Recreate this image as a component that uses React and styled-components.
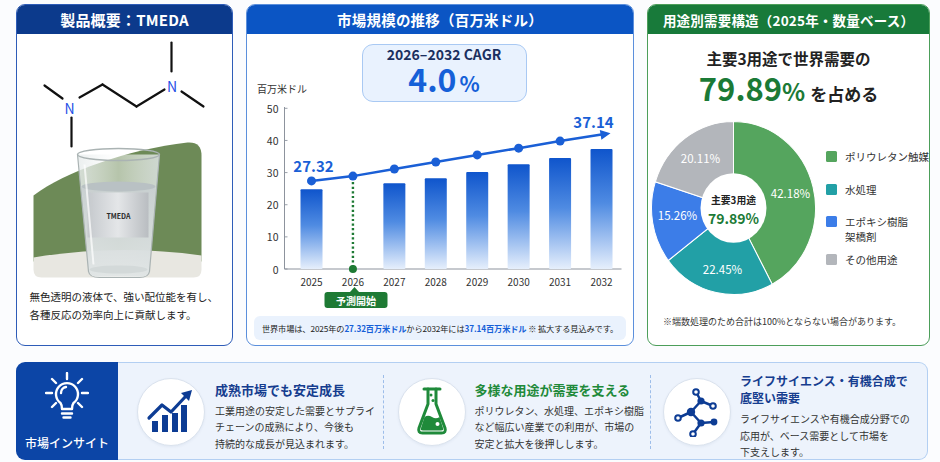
import React from 'react';
import styled, { createGlobalStyle } from 'styled-components';

const GlobalStyle = createGlobalStyle`
  body {
    margin: 0;
    background: #fbfcfe;
    font-family: "Noto Sans CJK JP", "Noto Sans", sans-serif;
    color: #222;
  }
`;

const Page = styled.div`
  width: 940px;
  box-sizing: border-box;
  padding: 4px 0 0 16px;
`;

const TopRow = styled.div`
  display: grid;
  grid-template-columns: 217px 388px 283px;
  column-gap: 13px;
  height: 342px;
`;

const Panel = styled.section`
  display: flex;
  flex-direction: column;
  box-sizing: border-box;
  height: 342px;
  background: #fff;
  border: 1.5px solid ${(p) => p.$border};
  border-radius: 9px;
  overflow: hidden;
`;

const PanelHeader = styled.h2`
  margin: 0;
  flex-shrink: 0;
  height: 29px;
  display: flex;
  align-items: center;
  justify-content: center;
  background: ${(p) => p.$bg};
  color: #fff;
  font-size: ${(p) => p.$size || '15px'};
  font-weight: 700;
  letter-spacing: 0.2px;
`;

/* ---------- left panel ---------- */

const Picture = styled.svg`
  display: block;
  flex-shrink: 0;
`;

const Description = styled.p`
  margin: 4px 0 0;
  padding-left: 12.5px;
  font-size: 10.5px;
  line-height: 18px;
  color: #222;
  white-space: nowrap;
`;

/* ---------- middle panel ---------- */

const CagrRow = styled.div`
  display: grid;
  grid-template-columns: 1fr auto 1fr;
  margin-top: 10px;
`;

const UnitLabel = styled.span`
  justify-self: start;
  align-self: end;
  margin: 0 0 6px 10px;
  font-size: 10px;
  color: #333;
`;

const CagrBox = styled.div`
  box-sizing: border-box;
  width: 165px;
  height: 58px;
  margin-left: 8px;
  display: flex;
  flex-direction: column;
  align-items: center;
  justify-content: center;
  background: #e9f2fe;
  border: 1.5px solid #a9c9f3;
  border-radius: 11px;
`;

const CagrLabel = styled.div`
  font-size: 14px;
  font-weight: 700;
  color: #1b2f5e;
  line-height: 16px;
`;

const CagrValue = styled.div`
  font-size: 32px;
  font-weight: 700;
  color: #1560d8;
  line-height: 33px;

  small {
    font-size: 21px;
    margin-left: 3px;
  }
`;

const ChartSvg = styled.svg`
  display: block;
  flex-shrink: 0;
`;

const ChartNote = styled.div`
  margin: 2px 7px 0;
  height: 24px;
  display: flex;
  align-items: center;
  justify-content: center;
  background: #eaf2fd;
  border-radius: 6px;
  font-size: 8.2px;
  letter-spacing: -0.1px;
  color: #222;
  white-space: nowrap;

  b {
    color: #1560d8;
    font-weight: 700;
  }
`;

/* ---------- right panel ---------- */

const Headline = styled.div`
  padding-top: 13px;
  text-align: center;
`;

const HeadlineTop = styled.div`
  font-size: 15.5px;
  font-weight: 700;
  line-height: 22px;
  color: #222;
`;

const HeadlineBig = styled.div`
  line-height: 38px;
  font-weight: 700;
  color: #222;
  font-size: 17px;
`;

const BigNumber = styled.span`
  font-size: 31px;
  color: #1b7a36;
  margin-right: 5px;

  small {
    font-size: 24px;
  }
`;

const PieRow = styled.div`
  display: flex;
  margin-top: 2px;
`;

const Legend = styled.ul`
  list-style: none;
  margin: 0 0 0 3px;
  padding: 34px 0 0;
  display: flex;
  flex-direction: column;
`;

const LegendItem = styled.li`
  display: flex;
  align-items: flex-start;
  gap: 8px;
  margin-top: ${(p) => p.$gap || '0px'};
  font-size: 10.5px;
  line-height: 15px;
  color: #333;
`;

const Swatch = styled.span`
  flex-shrink: 0;
  width: 11px;
  height: 11px;
  margin-top: 2px;
  border-radius: 1.5px;
  background: ${(p) => p.$color};
`;

const PieNote = styled.div`
  margin-top: auto;
  margin-bottom: 17px;
  padding-left: 15px;
  font-size: 9px;
  color: #333;
  white-space: nowrap;
`;

/* ---------- bottom insight bar ---------- */

const InsightBar = styled.div`
  display: flex;
  width: 912px;
  height: 98px;
  margin-top: 16px;
`;

const InsightBadge = styled.div`
  width: 102px;
  flex-shrink: 0;
  display: flex;
  flex-direction: column;
  align-items: center;
  justify-content: center;
  gap: 6px;
  background: #0c45a6;
  border-radius: 9px 0 0 9px;
  color: #fff;
  font-size: 12px;
  font-weight: 500;
`;

const InsightBody = styled.div`
  flex: 1;
  display: grid;
  grid-template-columns: 265px 1.5px 265px 1.5px 1fr;
  box-sizing: border-box;
  background: #edf3fc;
  border: 1.5px solid #b3cff2;
  border-left: none;
  border-radius: 0 9px 9px 0;
`;

const Divider = styled.div`
  align-self: center;
  height: 74px;
  border-left: 1.5px dashed #9dbde9;
`;

const InsightCard = styled.div`
  display: flex;
  align-items: center;
  gap: ${(p) => p.$gap || '9px'};
  padding-left: ${(p) => p.$pad || '13px'};
`;

const IconCircle = styled.div`
  flex-shrink: 0;
  width: 66px;
  height: 66px;
  display: flex;
  align-items: center;
  justify-content: center;
  background: #fff;
  border: 1px solid #dbe3ee;
  border-radius: 50%;
  box-shadow: 0 1px 3px rgba(20, 50, 110, 0.06);
`;

const CardText = styled.div`
  padding-top: 9px;
  white-space: nowrap;
`;

const CardTitle = styled.h3`
  margin: 0 0 5px;
  font-size: ${(p) => p.$size || '13px'};
  line-height: 17px;
  font-weight: 700;
  color: ${(p) => p.$color};
`;

const CardBody = styled.p`
  margin: 0;
  font-size: 10px;
  line-height: 16.5px;
  color: #333;
`;

/* ---------- drawings ---------- */

const years = [2025, 2026, 2027, 2028, 2029, 2030, 2031, 2032];
const bars = [24.8, null, 26.7, 28.2, 30.2, 32.6, 34.5, 37.3];
const trend = [27.4, 28.9, 31.1, 33.3, 35.5, 37.6, 39.8];
const X = (i) => 312 + i * 41.43;
const Y = (v) => 269 - v * 3.214;

const MarketChart = () => (
  <ChartSvg width="385" height="212" viewBox="247.5 102 385 212">
    <defs>
      <linearGradient id="barFill" x1="0" y1="0" x2="0" y2="1">
        <stop offset="0" stopColor="#0f55cc" />
        <stop offset="0.45" stopColor="#4f8be2" />
        <stop offset="1" stopColor="#e6effc" />
      </linearGradient>
    </defs>
    {[0, 10, 20, 30, 40, 50].map((v) => (
      <g key={v}>
        <text x="279" y={Y(v)} textAnchor="end" dominantBaseline="central" fontSize="10.5" fill="#333">
          {v}
        </text>
        <line x1="285" x2="288" y1={Y(v)} y2={Y(v)} stroke="#9aa0aa" strokeWidth="1" />
      </g>
    ))}
    <line x1="285" x2="285" y1="107" y2="269" stroke="#8d939d" strokeWidth="1" />
    <line x1="285" x2="622" y1="269" y2="269" stroke="#8d939d" strokeWidth="1" />
    {bars.map((v, i) =>
      v ? <rect key={i} x={X(i) - 11} y={Y(v)} width="22" height={269 - Y(v)} fill="url(#barFill)" rx="1" /> : null
    )}
    {years.map((y, i) => (
      <text key={y} x={X(i)} y="281" textAnchor="middle" dominantBaseline="central" fontSize="10" fill="#333">
        {y}
      </text>
    ))}
    <line x1={X(1)} x2={X(1)} y1={Y(28.9) + 6} y2="269" stroke="#1e7a34" strokeWidth="2.4" strokeDasharray="2.2 2.4" />
    <circle cx={X(1)} cy="269" r="4" fill="#1e7a34" />
    <polyline
      points={trend.map((v, i) => `${X(i)},${Y(v)}`).join(' ') + ' 602,134.6'}
      fill="none"
      stroke="#1a5fd6"
      strokeWidth="2.5"
    />
    <polygon points="611,133.2 601.9,139.7 600.3,129.9" fill="#1a5fd6" />
    {trend.map((v, i) => (
      <circle key={i} cx={X(i)} cy={Y(v)} r="4.5" fill="#1a5fd6" />
    ))}
    <text x="314" y="165" textAnchor="middle" dominantBaseline="central" fontSize="15" fontWeight="700" fill="#1a5fd6">
      27.32
    </text>
    <text x="594" y="121" textAnchor="middle" dominantBaseline="central" fontSize="15" fontWeight="700" fill="#1a5fd6">
      37.14
    </text>
    <polygon points="350.5,292 359.5,292 355,287" fill="#1e7a34" />
    <rect x="325" y="292" width="63" height="16" rx="3" fill="#1e7a34" />
    <text x="356.5" y="300.5" textAnchor="middle" dominantBaseline="central" fontSize="10" fontWeight="700" fill="#fff">
      予測開始
    </text>
  </ChartSvg>
);

const slices = [
  { v: 42.18, c: '#55a55e', label: '42.18%', at: [790, 188] },
  { v: 22.45, c: '#22a0a6', label: '22.45%', at: [722, 264] },
  { v: 15.26, c: '#3c7de8', label: '15.26%', at: [677, 210] },
  { v: 20.11, c: '#b3b6bb', label: '20.11%', at: [700, 153] },
];

const slicePath = (r, a0, a1) => {
  const rad = (d) => (d * Math.PI) / 180;
  const x0 = r * Math.sin(rad(a0));
  const y0 = -r * Math.cos(rad(a0));
  const x1 = r * Math.sin(rad(a1));
  const y1 = -r * Math.cos(rad(a1));
  const large = a1 - a0 > 180 ? 1 : 0;
  return `M0 0 L${x0} ${y0} A${r} ${r} 0 ${large} 1 ${x1} ${y1} Z`;
};

const DemandPie = () => {
  let acc = 0;
  return (
    <Picture width="175" height="186" viewBox="647.5 110 175 186">
      <g transform="translate(733 203) scale(1 1.055)">
        {slices.map((s) => {
          const a0 = acc * 3.6;
          acc += s.v;
          return <path key={s.label} d={slicePath(82, a0, acc * 3.6)} fill={s.c} stroke="#fff" strokeWidth="1" />;
        })}
        <circle r="33" fill="#fff" />
      </g>
      {slices.map((s) => (
        <text key={s.label} x={s.at[0]} y={s.at[1]} textAnchor="middle" dominantBaseline="central" fontSize="11.5" fill="#fff">
          {s.label}
        </text>
      ))}
      <text x="733" y="195" textAnchor="middle" dominantBaseline="central" fontSize="9.8" fontWeight="700" fill="#222">
        主要3用途
      </text>
      <text x="733" y="213" textAnchor="middle" dominantBaseline="central" fontSize="14" fontWeight="700" fill="#1b7a36">
        79.89%
      </text>
    </Picture>
  );
};

const ProductPicture = () => (
  <Picture width="214" height="250" viewBox="17.5 34.5 214 250">
    <defs>
      <linearGradient id="labelFill" x1="0" y1="0" x2="1" y2="0">
        <stop offset="0" stopColor="#c5c9cd" />
        <stop offset="0.5" stopColor="#e4e6e8" />
        <stop offset="1" stopColor="#b9bdc1" />
      </linearGradient>
      <linearGradient id="glassFill" x1="0" y1="0" x2="1" y2="0">
        <stop offset="0" stopColor="#e7ecec" stopOpacity="0.85" />
        <stop offset="0.5" stopColor="#ffffff" stopOpacity="0.5" />
        <stop offset="1" stopColor="#dfe5e5" stopOpacity="0.85" />
      </linearGradient>
      <linearGradient id="liquidFill" x1="0" y1="0" x2="0" y2="1">
        <stop offset="0" stopColor="#c8cfd1" />
        <stop offset="1" stopColor="#dfe4e4" />
      </linearGradient>
    </defs>
    <g stroke="#111" strokeWidth="2.2" strokeLinecap="round" fill="none">
      <line x1="45" y1="86" x2="63" y2="99" />
      <line x1="72" y1="118" x2="72" y2="147" />
      <line x1="80" y1="98" x2="103" y2="85" />
      <line x1="103" y1="85" x2="137" y2="107" />
      <line x1="137" y1="107" x2="165" y2="90" />
      <line x1="172" y1="43" x2="172" y2="72" />
      <line x1="182" y1="92" x2="204" y2="107" />
    </g>
    <text x="70" y="108" textAnchor="middle" dominantBaseline="central" fontSize="14" fill="#1f4fe6">N</text>
    <text x="172.5" y="86" textAnchor="middle" dominantBaseline="central" fontSize="14" fill="#1f4fe6">N</text>

    <path d="M34 196 C66 172 128 150 188 143 Q202 142 202 156 L202 262 L34 262 Z" fill="#6d8a57" />
    <path d="M34 258 Q118 244 202 256 L202 270 Q202 278 194 278 L42 278 Q34 278 34 270 Z" fill="#e8e7e1" />

    <path d="M78 155 L89 272 Q90 278 100 278 L140 278 Q149 278 150 272 L160 155 Z" fill="url(#glassFill)" />
    <path d="M82 187 L89 272 Q90 277 100 277 L140 277 Q149 277 150 272 L156 187 Z" fill="url(#liquidFill)" opacity="0.9" />
    <ellipse cx="119" cy="187" rx="37" ry="5" fill="#b9c1c4" />
    <rect x="88" y="193" width="61" height="45" fill="url(#labelFill)" />
    <text x="119" y="216" textAnchor="middle" dominantBaseline="central" fontSize="7" fontWeight="700" fill="#2a2a2a">
      TMEDA
    </text>
    <ellipse cx="119" cy="270" rx="29" ry="4" fill="#cfd6d6" opacity="0.8" />
    <path d="M78 155 L89 272 Q90 278 100 278 L140 278 Q149 278 150 272 L160 155" fill="none" stroke="#aab3b3" strokeWidth="1.2" />
    <ellipse cx="119" cy="155" rx="41" ry="6" fill="none" stroke="#aab3b3" strokeWidth="1.4" />
    <line x1="85" y1="165" x2="94" y2="265" stroke="#fff" strokeWidth="2" opacity="0.7" />
  </Picture>
);

const BulbIcon = () => (
  <svg width="44" height="56" viewBox="0 0 44 56" fill="none" stroke="#fff" strokeWidth="2.4" strokeLinecap="round" strokeLinejoin="round">
    <path d="M22 1v6M7 7l4 4M37 7l-4 4M1 21h6M37 21h6M7 35l4-4M37 35l-4-4" />
    <path d="M15.5 31 A11 11 0 1 1 28.5 31 C27 33 27 35 27 37 L17 37 C17 35 17 33 15.5 31 Z" />
    <path d="M16 21 A6 6 0 0 1 21 15" />
    <path d="M17 41.5h10M18.5 45.5h7" />
  </svg>
);

const GrowthIcon = () => (
  <svg width="50" height="50" viewBox="146 386 50 50">
    <g fill="#0d3c94">
      <rect x="152" y="420" width="6" height="11" />
      <rect x="162" y="414" width="6" height="17" />
      <rect x="172" y="412" width="6" height="19" />
      <rect x="181" y="404" width="6" height="27" />
    </g>
    <polyline points="149,417 162,404 171,411 186,395" fill="none" stroke="#0d3c94" strokeWidth="3.2" strokeLinejoin="round" strokeLinecap="round" />
    <polygon points="192,389 181,392 189,400" fill="#0d3c94" />
  </svg>
);

const FlaskIcon = () => (
  <svg width="40" height="52" viewBox="411 386 40 52">
    <g fill="none" stroke="#1f8a3a" strokeWidth="3" strokeLinecap="round" strokeLinejoin="round">
      <path d="M423 389 H439" />
      <path d="M427 389 V404 L418 428 Q416.5 433 421.5 433 H440.5 Q445.5 433 444 428 L435 404 V389" />
    </g>
    <path d="M423.5 417 Q427 414.5 431 417 T438.5 417 L442 428 Q443 430.5 440 430.5 H422 Q419 430.5 420 428 Z" fill="#1f8a3a" />
    <circle cx="430" cy="395" r="1.5" fill="#1f8a3a" />
    <circle cx="432" cy="400.5" r="1.5" fill="#1f8a3a" />
    <circle cx="436.5" cy="424" r="2" fill="#fff" />
  </svg>
);

const MoleculeIcon = () => (
  <svg width="46" height="50" viewBox="673 386 46 50">
    <g stroke="#0d3c94" strokeWidth="2.5" strokeLinecap="round">
      <line x1="695" y1="391" x2="700" y2="400" />
      <line x1="700" y1="400" x2="712" y2="405" />
      <line x1="700" y1="400" x2="690" y2="411" />
      <line x1="690" y1="411" x2="677" y2="417" />
      <line x1="690" y1="411" x2="700" y2="422" />
      <line x1="700" y1="422" x2="713" y2="421" />
      <line x1="700" y1="422" x2="692" y2="433" />
    </g>
    <g fill="#0d3c94">
      <circle cx="700" cy="400" r="3.6" />
      <circle cx="690" cy="411" r="4.2" />
      <circle cx="700" cy="422" r="3.6" />
      <circle cx="713" cy="421" r="3.4" />
    </g>
    <g fill="#fff" stroke="#0d3c94" strokeWidth="2">
      <circle cx="695" cy="391" r="2.8" />
      <circle cx="712" cy="405" r="2.8" />
      <circle cx="677" cy="417" r="2.8" />
      <circle cx="692" cy="433" r="2.8" />
    </g>
  </svg>
);

const App = () => (
  <>
    <GlobalStyle />
    <Page>
      <TopRow>
        <Panel $border="#2e5cb8">
          <PanelHeader $bg="#0c3a8c">製品概要：TMEDA</PanelHeader>
          <ProductPicture />
          <Description>
            無色透明の液体で、強い配位能を有し、
            <br />
            各種反応の効率向上に貢献します。
          </Description>
        </Panel>

        <Panel $border="#5b8fdc">
          <PanelHeader $bg="#0b55c4" $size="14.5px">市場規模の推移（百万米ドル）</PanelHeader>
          <CagrRow>
            <UnitLabel>百万米ドル</UnitLabel>
            <CagrBox>
              <CagrLabel>2026–2032 CAGR</CagrLabel>
              <CagrValue>
                4.0<small>%</small>
              </CagrValue>
            </CagrBox>
            <span />
          </CagrRow>
          <MarketChart />
          <ChartNote>
            世界市場は、2025年の<b>27.32百万米ドル</b>から2032年には<b>37.14百万米ドル</b>&nbsp;※ 拡大する見込みです。
          </ChartNote>
        </Panel>

        <Panel $border="#4c9e5a">
          <PanelHeader $bg="#187a3a" $size="13.5px">用途別需要構造（2025年・数量ベース）</PanelHeader>
          <Headline>
            <HeadlineTop>主要3用途で世界需要の</HeadlineTop>
            <HeadlineBig>
              <BigNumber>
                79.89<small>%</small>
              </BigNumber>
              を占める
            </HeadlineBig>
          </Headline>
          <PieRow>
            <DemandPie />
            <Legend>
              <LegendItem>
                <Swatch $color="#55a55e" />
                ポリウレタン触媒
              </LegendItem>
              <LegendItem $gap="18px">
                <Swatch $color="#22a0a6" />
                水処理
              </LegendItem>
              <LegendItem $gap="17px">
                <Swatch $color="#3c7de8" />
                <span>
                  エポキシ樹脂
                  <br />
                  架橋剤
                </span>
              </LegendItem>
              <LegendItem $gap="8px">
                <Swatch $color="#b3b6bb" />
                その他用途
              </LegendItem>
            </Legend>
          </PieRow>
          <PieNote>※端数処理のため合計は100%とならない場合があります。</PieNote>
        </Panel>
      </TopRow>

      <InsightBar>
        <InsightBadge>
          <BulbIcon />
          市場インサイト
        </InsightBadge>
        <InsightBody>
          <InsightCard $pad="19px" $gap="10px">
            <IconCircle>
              <GrowthIcon />
            </IconCircle>
            <CardText>
              <CardTitle $color="#163d8f">成熟市場でも安定成長</CardTitle>
              <CardBody>
                工業用途の安定した需要とサプライ
                <br />
                チェーンの成熟により、今後も
                <br />
                持続的な成長が見込まれます。
              </CardBody>
            </CardText>
          </InsightCard>
          <Divider />
          <InsightCard>
            <IconCircle>
              <FlaskIcon />
            </IconCircle>
            <CardText>
              <CardTitle $color="#1f8a3a">多様な用途が需要を支える</CardTitle>
              <CardBody>
                ポリウレタン、水処理、エポキシ樹脂
                <br />
                など幅広い産業での利用が、市場の
                <br />
                安定と拡大を後押しします。
              </CardBody>
            </CardText>
          </InsightCard>
          <Divider />
          <InsightCard $pad="12px">
            <IconCircle>
              <MoleculeIcon />
            </IconCircle>
            <CardText>
              <CardTitle $color="#163d8f" $size="12px">
                ライフサイエンス・有機合成で
                <br />
                底堅い需要
              </CardTitle>
              <CardBody>
                ライフサイエンスや有機合成分野での
                <br />
                応用が、ベース需要として市場を
                <br />
                下支えします。
              </CardBody>
            </CardText>
          </InsightCard>
        </InsightBody>
      </InsightBar>
    </Page>
  </>
);

export default App;
